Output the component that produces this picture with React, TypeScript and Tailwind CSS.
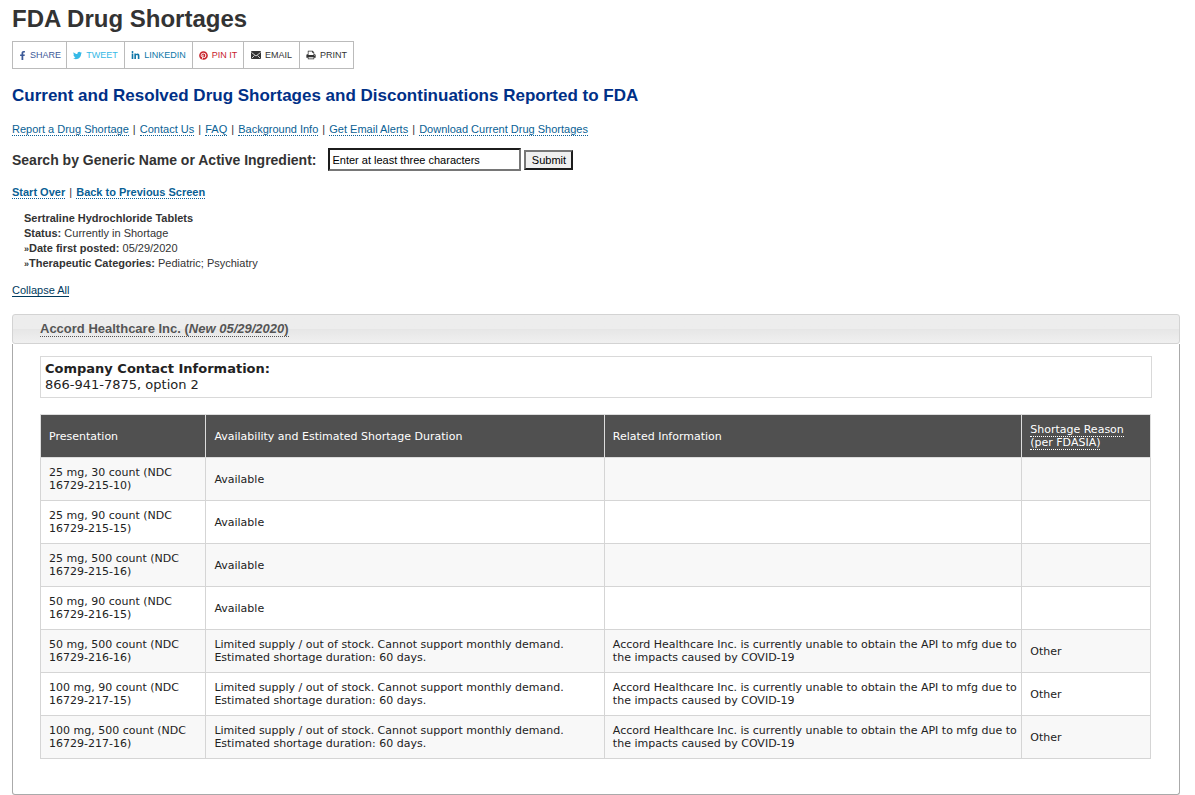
import type { ReactNode } from 'react'
import { FaFacebookF, FaLinkedinIn, FaPinterest, FaTwitter } from 'react-icons/fa'

function PrintIcon() {
  return (
    <svg viewBox="0 0 1792 1792" width="10" height="10" fill="currentColor" aria-hidden="true">
      <path d="M448 1536h896v-256H448v256zm0-640h896V512h-160q-40 0-68-28t-28-68V256H448v640zm1152 64q0-26-19-45t-45-19-45 19-19 45 19 45 45 19 45-19 19-45zm128 0v416q0 13-9.500 22.500t-22.500 9.500h-224v160q0 40-28 68t-68 28H416q-40 0-68-28t-28-68v-160H96q-13 0-22.500-9.500T64 1376V960q0-79 56.500-135.500T256 768h64V224q0-40 28-68t68-28h672q40 0 88 20t76 48l152 152q28 28 48 76t20 88v256h64q79 0 135.500 56.500T1728 960z" />
    </svg>
  )
}

function EmailIcon() {
  return (
    <svg viewBox="0 0 20 16" width="10" height="8" aria-hidden="true">
      <rect width="20" height="16" rx="2" fill="currentColor" />
      <path d="M1 3l9 7 9-7M2 14l5-5M18 14l-5-5" fill="none" stroke="white" strokeWidth="1.5" />
    </svg>
  )
}

const shares = [
  { label: 'SHARE', color: 'text-[#3b5998]', width: 'w-[55px]', gap: 'gap-[3px]', icon: <FaFacebookF size={9} /> },
  { label: 'TWEET', color: 'text-[#35b9e6]', width: 'w-[59px]', gap: 'gap-1', icon: <FaTwitter size={9} /> },
  { label: 'LINKEDIN', color: 'text-[#0e76a8]', width: 'w-[69px]', gap: 'gap-1', icon: <FaLinkedinIn size={9} /> },
  { label: 'PIN IT', color: 'text-[#c8232c]', width: 'w-[52px]', gap: 'gap-1', icon: <FaPinterest size={9} /> },
  { label: 'EMAIL', color: 'text-[#333333]', width: 'w-[57px]', gap: 'gap-1', icon: <EmailIcon /> },
  { label: 'PRINT', color: 'text-[#333333]', width: 'w-[55px]', gap: 'gap-1', icon: <PrintIcon /> },
]

const links = [
  'Report a Drug Shortage',
  'Contact Us',
  'FAQ',
  'Background Info',
  'Get Email Alerts',
  'Download Current Drug Shortages',
]

const limited = 'Limited supply / out of stock. Cannot support monthly demand. Estimated shortage duration: 60 days.'
const related = 'Accord Healthcare Inc. is currently unable to obtain the API to mfg due to the impacts caused by COVID-19'

const rows = [
  { presentation: '25 mg, 30 count (NDC 16729-215-10)', availability: 'Available', info: '', reason: '' },
  { presentation: '25 mg, 90 count (NDC 16729-215-15)', availability: 'Available', info: '', reason: '' },
  { presentation: '25 mg, 500 count (NDC 16729-215-16)', availability: 'Available', info: '', reason: '' },
  { presentation: '50 mg, 90 count (NDC 16729-216-15)', availability: 'Available', info: '', reason: '' },
  { presentation: '50 mg, 500 count (NDC 16729-216-16)', availability: limited, info: related, reason: 'Other' },
  { presentation: '100 mg, 90 count (NDC 16729-217-15)', availability: limited, info: related, reason: 'Other' },
  { presentation: '100 mg, 500 count (NDC 16729-217-16)', availability: limited, info: related, reason: 'Other' },
]

function DottedLink({ children }: { children: ReactNode }) {
  return (
    <a href="#" className="text-[#0a5f95] border-b border-dotted border-[#0a5f95]">{children}</a>
  )
}

export default function App() {
  return (
    <main className="pl-3 pr-[15px] pt-1 bg-white text-[#333333] text-[11px] leading-[15px] font-['Liberation_Sans',Arial,sans-serif]">

      {/* Page title and share buttons */}
      <h1 className="text-[24px] leading-[30px] font-bold">FDA Drug Shortages</h1>
      <ul className="flex mt-[7px]">
        {shares.map((s) => (
          <li key={s.label} className="-mr-px">
            <button type="button" className={`flex h-7 items-center justify-center border border-[#bbbbbb] bg-white text-[9px] ${s.gap} ${s.width} ${s.color}`}>
              {s.icon}
              {s.label}
            </button>
          </li>
        ))}
      </ul>

      <h2 className="mt-[17px] text-[17px] leading-5 font-bold text-[#003087]">
        Current and Resolved Drug Shortages and Discontinuations Reported to FDA
      </h2>

      <nav className="mt-4">
        {links.map((link, i) => (
          <span key={link}>
            {i > 0 && <span className="mx-px"> | </span>}
            <DottedLink>{link}</DottedLink>
          </span>
        ))}
      </nav>

      {/* Search */}
      <form className="flex items-center mt-[11px]" onSubmit={(e) => e.preventDefault()}>
        <label htmlFor="search" className="mr-3 text-[14px] leading-5 font-bold">
          Search by Generic Name or Active Ingredient:
        </label>
        <input
          id="search"
          type="text"
          defaultValue="Enter at least three characters"
          className="w-[193px] h-[23px] mr-[3px] px-0.5 bg-white text-black border-2 border-t-[#1c1c1c] border-l-[#1c1c1c] border-b-[#767676] border-r-[#767676]"
        />
        <button
          type="submit"
          className="w-[49px] h-5 leading-4 bg-[#efefef] text-black border-2 border-t-[#767676] border-l-[#767676] border-b-[#1c1c1c] border-r-[#1c1c1c]"
        >
          Submit
        </button>
      </form>

      <p className="mt-[14px]">
        <b><DottedLink>Start Over</DottedLink></b>
        <span className="mx-px"> | </span>
        <b><DottedLink>Back to Previous Screen</DottedLink></b>
      </p>

      {/* Drug summary */}
      <div className="mt-[11px] ml-3">
        <p><b>Sertraline Hydrochloride Tablets</b></p>
        <p><b>Status:</b> Currently in Shortage</p>
        <p><span className="text-[9px] leading-none font-bold">»</span><b>Date first posted:</b> 05/29/2020</p>
        <p><span className="text-[9px] leading-none font-bold">»</span><b>Therapeutic Categories:</b> Pediatric; Psychiatry</p>
      </div>

      <p className="mt-3">
        <a href="#" className="text-[#003a5d] border-b border-[#003a5d]">Collapse All</a>
      </p>

      {/* Manufacturer */}
      <section className="mt-4">
        <h3 className="h-[30px] pl-[27px] rounded-[3px] border border-[#d3d3d3] bg-linear-to-b from-[#ededed] from-50% via-[#e6e6e6] via-50% to-[#f0f0f0] text-[13px] leading-[27px] font-bold text-[#555555]">
          <a href="#" className="border-b border-dotted border-[#555555]">
            Accord Healthcare Inc. (<em>New 05/29/2020</em>)
          </a>
        </h3>
        <div className="px-[27px] pt-3 pb-[35px] border border-t-0 border-[#aaaaaa] rounded-b-[3px] text-[#222222] font-['DejaVu_Sans',Verdana,sans-serif]">
          <div className="p-1 border border-[#d9d9d9] text-[13px] leading-4">
            <p><b>Company Contact Information:</b></p>
            <p>866-941-7875, option 2</p>
          </div>
          <div className="mt-4 pr-px">
            <table className="w-full table-fixed border-collapse text-left text-[11px] leading-[13px]">
              <thead>
                <tr className="h-[43px] bg-[#505050] text-white">
                  <th className="w-[14.9%] px-2 border border-[#dddddd] font-medium">Presentation</th>
                  <th className="w-[35.9%] px-2 border border-[#dddddd] font-medium">Availability and Estimated Shortage Duration</th>
                  <th className="w-[37.6%] px-2 border border-[#dddddd] font-medium">Related Information</th>
                  <th className="px-2 border border-[#dddddd] font-medium">
                    <a href="#" className="border-b border-dotted border-white">Shortage Reason (per FDASIA)</a>
                  </th>
                </tr>
              </thead>
              <tbody>
                {rows.map((row) => (
                  <tr key={row.presentation} className="h-[43px] odd:bg-[#f8f8f8]">
                    <td className="px-2 border border-[#d5d5d5]">{row.presentation}</td>
                    <td className="px-2 border border-[#d5d5d5]">{row.availability}</td>
                    <td className="pl-2 border border-[#d5d5d5]">{row.info}</td>
                    <td className="px-2 border border-[#d5d5d5]">{row.reason}</td>
                  </tr>
                ))}
              </tbody>
            </table>
          </div>
        </div>
      </section>

    </main>
  )
}
